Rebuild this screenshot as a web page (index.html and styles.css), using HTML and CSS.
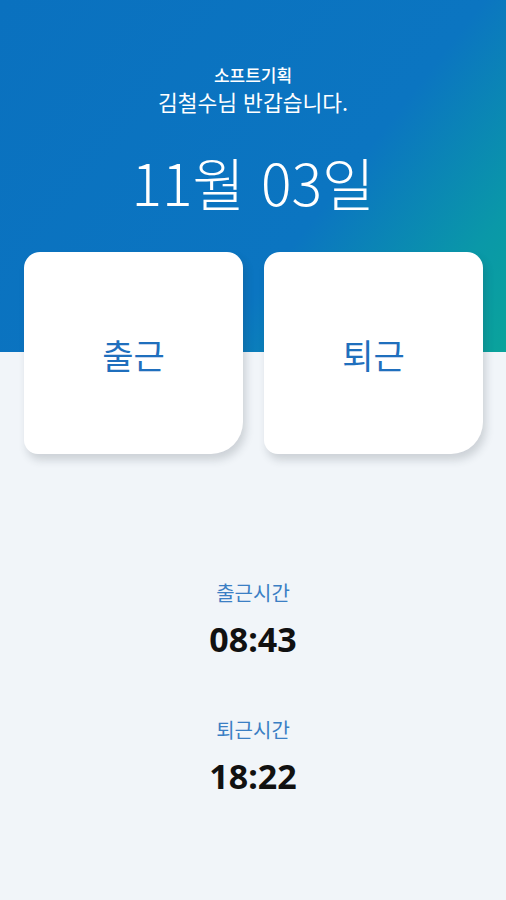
FILE: index.html
```html
<!DOCTYPE html>
<html lang="ko">
<head>
<meta charset="utf-8">
<title>출퇴근</title>
<link rel="stylesheet" href="styles.css">
</head>
<body>
<main class="page">
  <header class="hero">
    <p class="company">소프트기획</p>
    <p class="greeting">김철수님 반갑습니다.</p>
    <h1 class="date">11월 03일</h1>
  </header>
  <section class="actions">
    <button class="card card-in" type="button">출근</button>
    <button class="card card-out" type="button">퇴근</button>
  </section>
  <section class="times">
    <div class="time-block">
      <p class="time-label">출근시간</p>
      <p class="time-value">08:43</p>
    </div>
    <div class="time-block">
      <p class="time-label">퇴근시간</p>
      <p class="time-value">18:22</p>
    </div>
  </section>
</main>
</body>
</html>
```
FILE: styles.css
```css
html, body {
  margin: 0;
  padding: 0;
}
body {
  font-family: "Noto Sans CJK KR", "Noto Sans", sans-serif;
  background: #f1f5f9;
}
.page {
  min-height: 900px;
  background:
    linear-gradient(128deg, #0a71bf 0%, #0b75c1 62%, #0a98a8 86%, #0aa39b 100%) top left / 100% 352px no-repeat,
    #f1f5f9;
  display: flex;
  flex-direction: column;
}
.hero {
  display: flex;
  flex-direction: column;
  align-items: center;
  padding-top: 63px;
  color: #fff;
}
.company {
  margin: 0;
  font-size: 17px;
  line-height: 23px;
  font-weight: 500;
}
.greeting {
  margin: 2px 0 0;
  font-size: 21.5px;
  line-height: 28px;
}
.date {
  margin: 31px 0 0;
  font-size: 57px;
  line-height: 68px;
  font-weight: 300;
  letter-spacing: 0;
}
.actions {
  display: grid;
  grid-template-columns: 1fr 1fr;
  gap: 21px;
  padding: 0 23px 0 24px;
  margin-top: 37px;
}
.card {
  height: 202px;
  border: none;
  background: #fff;
  border-radius: 16px 16px 32px 14px;
  box-shadow: 3px 6px 8px rgba(40, 50, 60, 0.18);
  font-family: inherit;
  font-size: 34px;
  color: #1f6fbd;
  padding: 0;
  padding-top: 2px;
}
.times {
  display: flex;
  flex-direction: column;
  align-items: center;
  margin-top: 125px;
  gap: 56px;
}
.time-block {
  display: flex;
  flex-direction: column;
  align-items: center;
  gap: 11px;
}
.time-label {
  margin: 0;
  font-size: 20px;
  line-height: 28px;
  color: #3b7fc4;
}
.time-value {
  margin: 0;
  font-family: "Noto Sans", "Open Sans", sans-serif;
  font-size: 34px;
  line-height: 42px;
  font-weight: 700;
  color: #111;
}
```
